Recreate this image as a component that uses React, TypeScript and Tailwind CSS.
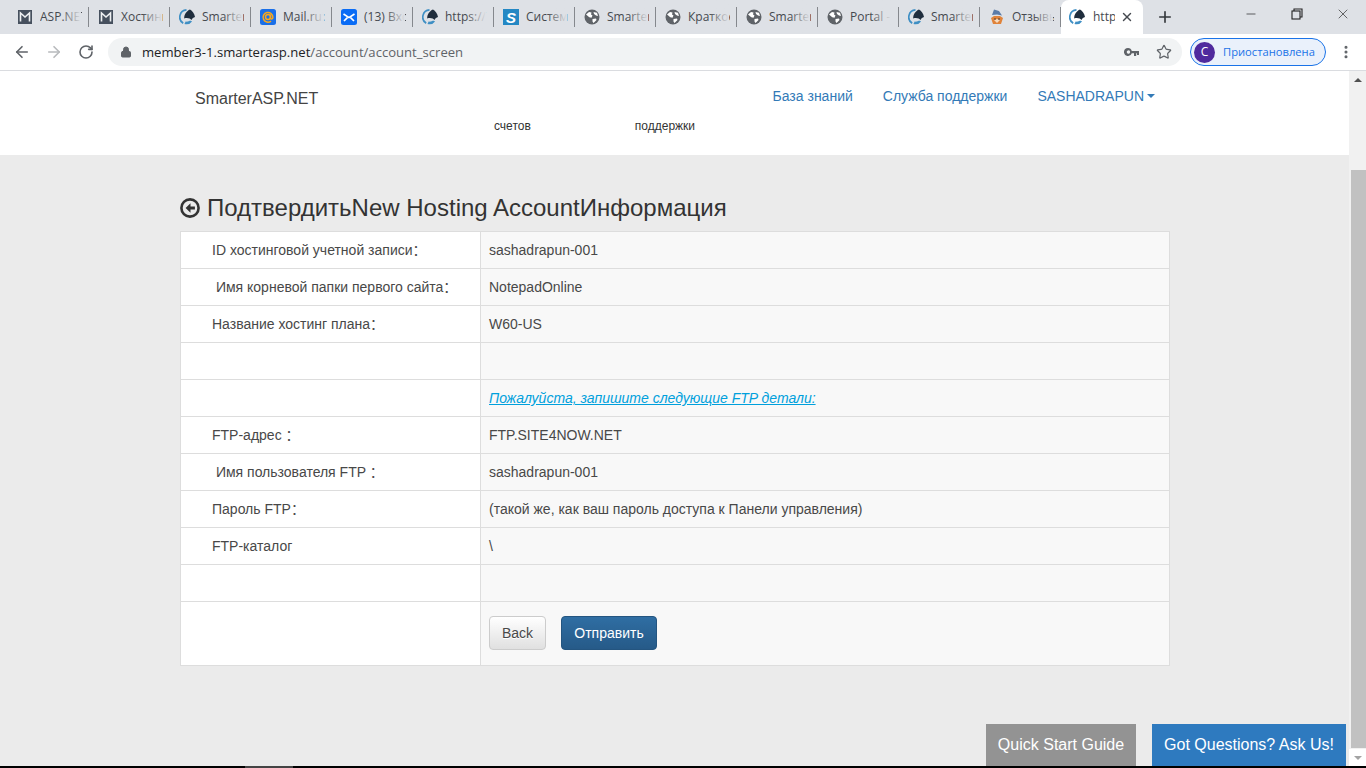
import { ArrowLeft, ArrowRight, RotateCw, Lock, Star, X, Plus, Minus, EllipsisVertical } from 'lucide-react';

const SmarterIcon = () => (
  <svg width="16" height="16" viewBox="0 0 16 16" className="shrink-0">
    <path d="M7.5 .9A7.2 7.2 0 0 0 4.2 14.2" fill="none" stroke="#3f8fc4" strokeWidth="1.7" />
    <path d="M5.5 15a7.2 7.2 0 0 0 7.6-2.6L11 11.6c-1 1-3 1.4-4.4 1z" fill="#3f8fc4" />
    <path d="M11 .6c2.4 1.4 4.4 4 5 7.4-1.6 .4-2.6 1.2-3.4 3-1.4-1.4-3.4-2.4-7.4-1.6C5 5.600 7.600 2 11 .6z" fill="#1f2d3d" />
  </svg>
);

const GmailIcon = () => (
  <svg width="16" height="16" viewBox="0 0 16 16" className="shrink-0">
    <rect x="1" y="1" width="14" height="14" fill="#46505e" />
    <path d="M3.500 12.500V4l4.500 4 4.500-4v8.500" fill="none" stroke="#eef0f2" strokeWidth="1.600" />
  </svg>
);

const MailruIcon = () => (
  <svg width="16" height="16" viewBox="0 0 16 16" className="shrink-0">
    <rect width="16" height="16" rx="2.500" fill="#1a6fe8" />
    <circle cx="8" cy="8" r="2.500" fill="none" stroke="#f9a81a" strokeWidth="1.500" />
    <path d="M10.500 5.500v3.400c0 1.600 2.400 1.600 2.400-.6A4.900 4.900 0 1 0 11 12.200" fill="none" stroke="#f9a81a" strokeWidth="1.500" />
  </svg>
);

const InboxIcon = () => (
  <svg width="16" height="16" viewBox="0 0 16 16" className="shrink-0">
    <rect width="16" height="16" rx="2.500" fill="#0a6cf5" />
    <path d="M2.500 5l5.500 3.600L13.500 5M3 12l3.400-3.400M13 12L9.600 8.600" fill="none" stroke="#fff" strokeWidth="1.700" />
  </svg>
);

const SiteIcon = () => (
  <div className="flex h-4 w-4 shrink-0 items-center justify-center bg-[#2488c4] text-[15px] leading-none font-bold text-white italic [font-family:'Liberation_Sans',sans-serif]">
    S
  </div>
);

const GlobeIcon = () => (
  <svg width="16" height="16" viewBox="0 0 16 16" className="shrink-0">
    <circle cx="8" cy="8" r="7.500" fill="#5f6368" />
    <path d="M2 5.500l3-2.500 2.500 .5-.5 2 1.500 1-1 2.200-2.200-.5zM9.500 3l3.500 .8 1 3.200-2-.4-2-1.600zM8.500 10l3.500-.5 .5 1.500-3 3-1-1.500z" fill="#fff" />
  </svg>
);

const FoxIcon = () => (
  <svg width="16" height="16" viewBox="0 0 16 16" className="shrink-0">
    <path d="M2 9l2 6h8l2-6-3-2H5z" fill="#e0833a" />
    <path d="M5 11l3 3 3-3-3-1z" fill="#f6dcc0" />
    <path d="M3 6L5 .5l5 1.500 3 4.500-5-1z" fill="#5a7ba8" />
    <circle cx="6" cy="10" r=".8" fill="#333" />
    <circle cx="10" cy="10" r=".8" fill="#333" />
  </svg>
);

const tabs = [
  { id: 1, icon: <GmailIcon />, title: 'ASP.NET' },
  { id: 2, icon: <GmailIcon />, title: 'Хостинг' },
  { id: 3, icon: <SmarterIcon />, title: 'Smarter' },
  { id: 4, icon: <MailruIcon />, title: 'Mail.ru:' },
  { id: 5, icon: <InboxIcon />, title: '(13) Вход' },
  { id: 6, icon: <SmarterIcon />, title: 'https://' },
  { id: 7, icon: <SiteIcon />, title: 'Система' },
  { id: 8, icon: <GlobeIcon />, title: 'Smarter' },
  { id: 9, icon: <GlobeIcon />, title: 'Краткое' },
  { id: 10, icon: <GlobeIcon />, title: 'Smarter' },
  { id: 11, icon: <GlobeIcon />, title: 'Portal -' },
  { id: 12, icon: <SmarterIcon />, title: 'Smarter' },
  { id: 13, icon: <FoxIcon />, title: 'Отзывы' },
];

const rows: { label: string; value?: string; link?: boolean }[] = [
  { label: 'ID хостинговой учетной записи：', value: 'sashadrapun-001' },
  { label: '\u00a0Имя корневой папки первого сайта：', value: 'NotepadOnline' },
  { label: 'Название хостинг плана：', value: 'W60-US' },
  { label: '' },
  { label: '', value: 'Пожалуйста, запишите следующие FTP детали:', link: true },
  { label: 'FTP-адрес ：', value: 'FTP.SITE4NOW.NET' },
  { label: '\u00a0Имя пользователя FTP ：', value: 'sashadrapun-001' },
  { label: 'Пароль FTP：', value: '(такой же, как ваш пароль доступа к Панели управления)' },
  { label: 'FTP-каталог', value: '\\' },
  { label: '' },
];

export default function App() {
  return (
    <div className="flex h-[768px] w-[1366px] flex-col overflow-hidden bg-white text-[14px] leading-5 text-[#333] [font-family:'Liberation_Sans','Noto_Sans_CJK_SC',sans-serif]">
      {/* Tab strip */}
      <div className="flex h-[34px] shrink-0 bg-[#dee1e6] pl-2 [font-family:'Open_Sans',sans-serif] text-[12px] text-[#45494f]">
        {tabs.map((tab) => (
          <div key={tab.id} className="relative flex h-full w-[81px] items-center gap-[7px] pl-[9px]">
            {tab.icon}
            <span className="w-[42px] overflow-hidden whitespace-nowrap">{tab.title}</span>
            <div className="absolute top-0 right-[8px] h-full w-5 bg-gradient-to-r from-transparent to-[#dee1e6]" />
            <div className="absolute top-[7px] right-0 h-[20px] w-px bg-[#85888d]" />
          </div>
        ))}
        <div className="relative flex h-full w-[82px] items-center gap-[8px] rounded-t-lg bg-white pl-2">
          <SmarterIcon />
          <span className="w-[22px] overflow-hidden whitespace-nowrap">http</span>
          <X size={14} strokeWidth={2.5} className="-ml-[3px] text-[#45494f]" />
        </div>
        <div className="ml-[13px] flex h-full items-center">
          <Plus size={18} strokeWidth={2.2} className="text-[#35383c]" />
        </div>
        <div className="ml-auto flex h-[28px] text-[#222]">
          <div className="flex w-[46px] items-center justify-center">
            <Minus size={14} strokeWidth={1.2} />
          </div>
          <div className="flex w-[46px] items-center justify-center">
            <svg width="12" height="12" viewBox="0 0 12 12" fill="none" stroke="#222" strokeWidth="1.1">
              <rect x="1" y="3" width="8" height="8" />
              <path d="M3 3V1h8v8H9" />
            </svg>
          </div>
          <div className="flex w-[46px] items-center justify-center">
            <X size={16} strokeWidth={1} />
          </div>
        </div>
      </div>

      {/* Toolbar */}
      <div className="flex h-[37px] shrink-0 items-start border-b border-[#dadce0] pt-1 [font-family:'Open_Sans',sans-serif]">
        <div className="flex h-7 w-[108px] items-center pl-[13px] text-[#5f6368]">
          <ArrowLeft size={18} strokeWidth={2.2} />
          <ArrowRight size={18} strokeWidth={2.2} className="ml-[14px] text-[#b8babd]" />
          <RotateCw size={16} strokeWidth={2.4} className="ml-[15px]" />
        </div>
        <div className="flex h-7 w-[1074px] items-center rounded-full bg-[#f1f3f4] pl-3 pr-[10px]">
          <Lock size={12} fill="#5f6368" className="text-[#5f6368]" />
          <span className="ml-[10px] text-[13.1px] text-[#5f6368]">
            <span className="text-[#202124]">member3-1.smarterasp.net</span>/account/account_screen
          </span>
          <svg width="15" height="9" viewBox="0 0 15 9" className="ml-auto mr-[17px]" fill="#5f6368">
            <path d="M4 0a4 4 0 1 0 3.800 5.200H10V8h2.200V5.200H13V7h2V3H7.800A4 4 0 0 0 4 0zm0 2.400a1.700 1.700 0 1 1 0 3.300 1.700 1.700 0 0 1 0-3.300z" />
          </svg>
          <Star size={16} strokeWidth={1.8} className="text-[#5f6368]" />
        </div>
        <div className="ml-2 flex h-7 w-[136px] items-center rounded-full border border-[#1a73e8] bg-[#eaf1fb] pl-[3px]">
          <div className="flex h-[21px] w-[21px] items-center justify-center rounded-full bg-[#4f2a9e] text-[12px] text-white">С</div>
          <span className="ml-2 text-[11.2px] text-[#1a73e8]">Приостановлена</span>
        </div>
        <div className="flex h-7 flex-1 items-center justify-center text-[#5f6368]">
          <EllipsisVertical size={16} strokeWidth={2.6} />
        </div>
      </div>

      {/* Page + scrollbar */}
      <div className="flex min-h-0 flex-1">
        <div className="flex min-w-0 flex-1 flex-col bg-[#ebebeb]">
          <header className="h-[84px] shrink-0 bg-white">
            <div className="flex h-[45px] items-start pl-[195px]">
              <a className="mt-[18px] text-[16px] leading-5 text-[#444]">SmarterASP.NET</a>
              <nav className="ml-auto mr-[194px] mt-[15px] flex gap-[30px] text-[#337ab7]">
                <a>База знаний</a>
                <a>Служба поддержки</a>
                <a className="flex items-center gap-[3px]">
                  SASHADRAPUN
                  <span className="h-0 w-0 border-x-4 border-t-4 border-x-transparent border-t-[#337ab7]" />
                </a>
              </nav>
            </div>
            <div className="flex pl-[494px] text-[12px] leading-5">
              <span>счетов</span>
              <span className="ml-[104px]">поддержки</span>
            </div>
          </header>

          <main className="pl-[180px] pt-[39px]">
            <h1 className="flex h-[27px] items-center gap-[7px] text-[24px] leading-[27px]">
              <svg width="20" height="20" viewBox="0 0 20 20">
                <circle cx="10" cy="10" r="8.600" fill="none" stroke="#333" strokeWidth="2.600" />
                <path d="M10.500 5.200L5.600 10l4.900 4.800V11.600h4.400V8.400h-4.400z" fill="#333" />
              </svg>
              ПодтвердитьNew Hosting AccountИнформация
            </h1>
            <table className="mt-[10px] w-[990px] table-fixed border-collapse border border-[#ddd] text-[#484848]">
              <tbody>
                {rows.map((row, i) => (
                  <tr key={i} className="h-[37px]">
                    <td className="w-[300px] border border-[#ddd] bg-white pl-[31px] whitespace-nowrap">{row.label}</td>
                    <td className="border border-[#ddd] bg-[#f8f8f8] pl-2">
                      {row.link ? <a className="text-[#00a0dc] italic underline">{row.value}</a> : row.value}
                    </td>
                  </tr>
                ))}
                <tr className="h-[64px]">
                  <td className="border border-[#ddd] bg-white" />
                  <td className="border border-[#ddd] bg-[#f8f8f8] pb-[2px] pl-2">
                    <div className="flex gap-[15px]">
                      <button className="h-[34px] w-[57px] rounded border border-[#ccc] bg-gradient-to-b from-white to-[#e0e0e0] [text-shadow:0_1px_0_#fff]">
                        Back
                      </button>
                      <button className="h-[34px] w-[96px] rounded border border-[#245580] bg-gradient-to-b from-[#2f6ea3] to-[#265a88] text-white">
                        Отправить
                      </button>
                    </div>
                  </td>
                </tr>
              </tbody>
            </table>
          </main>

          <div className="mt-auto flex justify-end gap-4 pr-[3px] text-[16px] text-white">
            <a className="flex h-[42px] w-[150px] items-center justify-center bg-[#939393]">Quick Start Guide</a>
            <a className="flex h-[42px] w-[194px] items-center justify-center bg-[#2e7abf]">Got Questions? Ask Us!</a>
          </div>
        </div>

        {/* Scrollbar */}
        <div className="flex w-[17px] shrink-0 flex-col items-center bg-[#f1f1f1]">
          <div className="flex h-[17px] w-full items-center justify-center">
            <span className="h-0 w-0 border-x-4 border-b-4 border-x-transparent border-b-[#505050]" />
          </div>
          <div className="mt-[82px] ml-px h-[578px] w-[15px] bg-[#c1c1c1]" />
          <div className="mt-auto flex h-[17px] w-full items-center justify-center bg-white">
            <span className="h-0 w-0 border-x-4 border-t-4 border-x-transparent border-t-[#a3a3a3]" />
          </div>
        </div>
      </div>

      {/* Bottom edge of the capture */}
      <div className="flex h-[2px] shrink-0 bg-black">
        <div className="ml-[245px] w-[48px] bg-[#444]" />
      </div>
    </div>
  );
}
